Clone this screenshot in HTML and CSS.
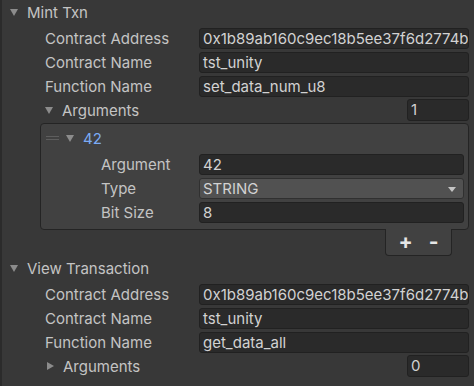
FILE: index.html
```html
<!DOCTYPE html>
<html>
<head>
<meta charset="utf-8">
<link rel="stylesheet" href="styles.css">
</head>
<body>
<div class="panel">
  <div class="section">
    <div class="header"><span class="tri down"></span><span class="htext">Mint Txn</span></div>
    <div class="row"><span class="label">Contract Address</span><div class="field">0x1b89ab160c9ec18b5ee37f6d2774b</div></div>
    <div class="row"><span class="label">Contract Name</span><div class="field">tst_unity</div></div>
    <div class="row"><span class="label">Function Name</span><div class="field">set_data_num_u8</div></div>
    <div class="row args"><span class="tri down small"></span><span class="argtext">Arguments</span><div class="count">1</div></div>
    <div class="list">
      <div class="item-head"><span class="handle"></span><span class="tri down small"></span><span class="blue">42</span></div>
      <div class="row inner"><span class="label">Argument</span><div class="field">42</div></div>
      <div class="row inner"><span class="label">Type</span><div class="field dropdown">STRING<span class="ddarrow"></span></div></div>
      <div class="row inner"><span class="label">Bit Size</span><div class="field">8</div></div>
    </div>
    <div class="footer-wrap"><div class="pm"><span class="plus">+</span><span class="minus">-</span></div></div>
  </div>
  <div class="section">
    <div class="header"><span class="tri down"></span><span class="htext">View Transaction</span></div>
    <div class="row"><span class="label">Contract Address</span><div class="field">0x1b89ab160c9ec18b5ee37f6d2774b</div></div>
    <div class="row"><span class="label">Contract Name</span><div class="field">tst_unity</div></div>
    <div class="row"><span class="label">Function Name</span><div class="field">get_data_all</div></div>
    <div class="row args"><span class="tri right small"></span><span class="argtext">Arguments</span><div class="count">0</div></div>
  </div>
</div>
</body>
</html>
```
FILE: styles.css
```css
html, body {
  margin: 0;
  padding: 0;
  background: #383838;
  height: 100%;
  overflow: hidden;
}
body {
  font-family: Inter, "Noto Sans", sans-serif;
  font-size: 15px;
  color: #c4c4c4;
}
.panel {
  border-left: 2px solid #2b2b2b;
  height: 100%;
  box-sizing: border-box;
  padding-right: 5px;
}
.header {
  height: 24px;
  display: flex;
  align-items: center;
  padding-left: 8px;
  margin-bottom: 2px;
}
.htext {
  margin-left: 9px;
}
.tri {
  display: inline-block;
  width: 0;
  height: 0;
}
.tri.down {
  border-left: 4px solid transparent;
  border-right: 4px solid transparent;
  border-top: 7px solid #8c8c8c;
}
.tri.right {
  border-top: 4px solid transparent;
  border-bottom: 4px solid transparent;
  border-left: 7px solid #8c8c8c;
}
.row {
  height: 24px;
  display: flex;
  align-items: center;
  padding-left: 43px;
}
.label {
  width: 154px;
  flex: none;
  white-space: nowrap;
}
.field {
  flex: 1;
  min-width: 0;
  height: 21px;
  box-sizing: border-box;
  background: #2a2a2a;
  border: 1px solid #212121;
  border-radius: 3px;
  padding-left: 3px;
  line-height: 19px;
  white-space: nowrap;
  overflow: hidden;
  color: #d2d2d2;
}
.args {
  padding-left: 41px;
}
.args .tri.down {
  margin-right: 9px;
  margin-left: 2px;
}
.args .tri.right {
  margin-left: 4px;
  margin-right: 9px;
}
.argtext {
  flex: 1;
}
.count {
  width: 62px;
  height: 22px;
  box-sizing: border-box;
  background: #2a2a2a;
  border: 1px solid #212121;
  border-radius: 3px;
  padding-left: 3px;
  line-height: 20px;
  color: #d2d2d2;
}
.list {
  margin-left: 38px;
  margin-top: 1px;
  background: #414141;
  border: 1px solid #242424;
  border-radius: 4px;
  padding: 2px 4px 5px 0;
}
.item-head {
  height: 24px;
  display: flex;
  align-items: center;
  padding-left: 5px;
  margin-bottom: 2px;
}
.handle {
  width: 13px;
  height: 4px;
  border-top: 1px solid #5e5e5e;
  border-bottom: 1px solid #5e5e5e;
  box-sizing: border-box;
  margin-right: 7px;
}
.item-head .tri {
  margin-right: 9px;
}
.blue {
  color: #7babf5;
}
.row.inner {
  padding-left: 60px;
}
.row.inner .label {
  width: 98px;
}
.dropdown {
  background: #515151;
  border-color: #303030;
  position: relative;
  color: #d2d2d2;
}
.ddarrow {
  position: absolute;
  right: 7px;
  top: 8px;
  border-left: 4px solid transparent;
  border-right: 4px solid transparent;
  border-top: 5px solid #c4c4c4;
}
.footer-wrap {
  display: flex;
  justify-content: flex-end;
  padding-right: 17px;
}
.pm {
  width: 67px;
  height: 27px;
  box-sizing: border-box;
  background: #414141;
  border: 1px solid #242424;
  border-top: none;
  border-radius: 0 0 4px 4px;
  display: flex;
  align-items: center;
  justify-content: center;
  gap: 16px;
  font-weight: 700;
  font-size: 21px;
  line-height: 1;
  color: #e6e6e6;
  margin-top: -1px;
  padding-bottom: 2px;
}
```
